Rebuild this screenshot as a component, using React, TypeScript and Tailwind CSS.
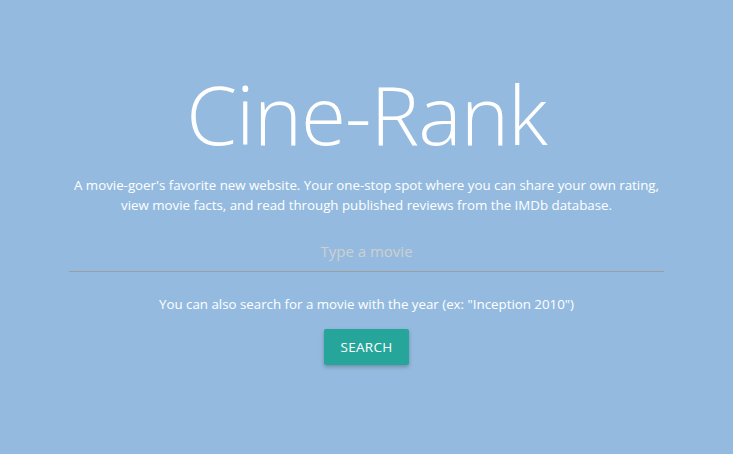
export default function App() {
  return (
    <div className="min-h-[454px] w-full bg-[#94bbdf] font-['Open_Sans',sans-serif] text-white">
      <div className="mx-auto flex w-[595px] flex-col items-center pt-[63px]">
        <h1 className="text-[82px] font-light leading-[100px] tracking-[-1px]">Cine-Rank</h1>
        <p className="mt-[12px] w-[640px] text-center text-[13.3px] leading-[20px]">
          A movie-goer's favorite new website. Your one-stop spot where you can share your own rating,
          <br />
          view movie facts, and read through published reviews from the IMDb database.
        </p>
        <input
          type="text"
          placeholder="Type a movie"
          className="mt-[17px] h-[40px] w-full border-b border-[#9e9e9e] bg-transparent pb-[2px] text-center text-[15px] text-white outline-none placeholder:text-[#cfcfcf]"
        />
        <p className="mt-[22px] text-[13.3px] leading-[21px]">
          You can also search for a movie with the year (ex: "Inception 2010")
        </p>
        <button className="mt-[14px] h-[36px] rounded-[2px] bg-[#26a69a] px-[16px] text-[13.5px] uppercase tracking-[0.3px] text-white shadow-[0_2px_4px_rgba(0,0,0,0.25)]">
          Search
        </button>
      </div>
    </div>
  );
}
